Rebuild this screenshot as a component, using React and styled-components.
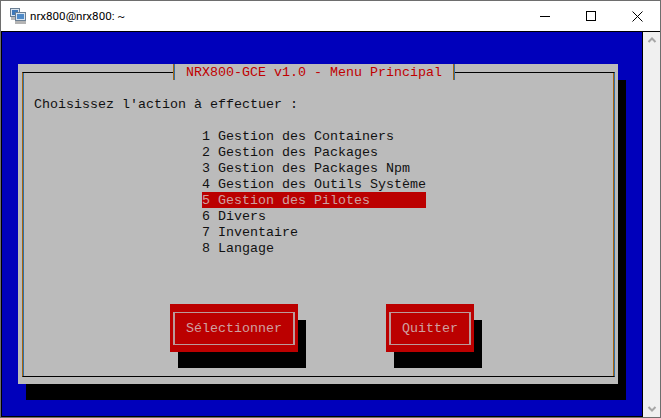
import React from "react";
import styled, { createGlobalStyle } from "styled-components";

const GlobalStyle = createGlobalStyle`
  html, body {
    margin: 0;
    padding: 0;
    background: #fff;
  }
`;

const items = [
  "Gestion des Containers",
  "Gestion des Packages",
  "Gestion des Packages Npm",
  "Gestion des Outils Système",
  "Gestion des Pilotes",
  "Divers",
  "Inventaire",
  "Langage",
];

function App() {
  return (
    <Window>
      <GlobalStyle />
      <TitleBar>
        <AppIcon />
        <WindowTitle>nrx800@nrx800: ~</WindowTitle>
        <Controls>
          <Control>
            <svg width="10" height="10" viewBox="0 0 10 10">
              <path d="M0 5.5H10" stroke="#000" />
            </svg>
          </Control>
          <Control>
            <svg width="10" height="10" viewBox="0 0 10 10">
              <rect x="0.5" y="0.5" width="9" height="9" fill="none" stroke="#000" />
            </svg>
          </Control>
          <Control>
            <svg width="11" height="11" viewBox="0 0 11 11">
              <path d="M0.5 0.5L10.5 10.5M10.5 0.5L0.5 10.5" stroke="#000" />
            </svg>
          </Control>
        </Controls>
      </TitleBar>
      <Body>
        <Terminal>
          <Dialog>
            <Frame>
              <Heading>NRX800-GCE v1.0 - Menu Principal</Heading>
              <Prompt>Choisissez l'action à effectuer :</Prompt>
              <Menu>
                {items.map((label, i) => (
                  <MenuItem key={label} $active={i === 4}>
                    <MenuNumber>{i + 1}</MenuNumber>
                    {label}
                  </MenuItem>
                ))}
              </Menu>
              <Buttons>
                <Button $width={128}>
                  <ButtonInner>Sélectionner</ButtonInner>
                </Button>
                <Button $width={88}>
                  <ButtonInner>Quitter</ButtonInner>
                </Button>
              </Buttons>
            </Frame>
          </Dialog>
        </Terminal>
        <Scrollbar>
          <svg width="10" height="8" viewBox="0 0 10 8">
            <path d="M1.5 6L5 2.5L8.5 6" fill="none" stroke="#a6a6a6" strokeWidth="2" />
          </svg>
          <svg width="10" height="8" viewBox="0 0 10 8">
            <path d="M1.5 2L5 5.5L8.5 2" fill="none" stroke="#a6a6a6" strokeWidth="2" />
          </svg>
        </Scrollbar>
      </Body>
    </Window>
  );
}

function AppIcon() {
  return (
    <Icon width="16" height="16" viewBox="0 0 16 16">
      <rect x="0.5" y="0.5" width="9" height="8" fill="#d8e4f0" stroke="#6b7f93" />
      <rect x="2" y="2" width="6" height="5" fill="#3f78b8" />
      <rect x="1" y="9" width="8" height="3" fill="#b8b8b8" />
      <rect x="5.5" y="4.5" width="10" height="8" fill="#d8e4f0" stroke="#6b7f93" />
      <rect x="7" y="6" width="7" height="5" fill="#4f8ac8" />
      <rect x="5" y="13" width="11" height="3" fill="#b4b4b4" />
    </Icon>
  );
}

export default App;

const Window = styled.div`
  width: 661px;
  height: 418px;
  box-sizing: border-box;
  border: 1px solid #6e6e6e;
  display: flex;
  flex-direction: column;
  overflow: hidden;
  background: #fff;
`;

const TitleBar = styled.div`
  height: 30px;
  flex: none;
  display: flex;
  align-items: center;
  padding-left: 9px;
  background: #fff;
  border-bottom: 1px solid #000;
`;

const Icon = styled.svg`
  flex: none;
  margin-right: 4px;
`;

const WindowTitle = styled.div`
  font-family: Roboto, "Liberation Sans", sans-serif;
  font-size: 11.6px;
  color: #000;
`;

const Controls = styled.div`
  margin-left: auto;
  display: flex;
`;

const Control = styled.div`
  width: 46px;
  height: 28px;
  display: flex;
  align-items: center;
  justify-content: center;
`;

const Body = styled.div`
  flex: 1;
  display: flex;
  min-height: 0;
`;

const Terminal = styled.div`
  width: 642px;
  flex: none;
  box-sizing: border-box;
  padding: 32px 0 0 16px;
  background: #0000bb;
  border-left: 1px solid #000;
  border-right: 1px solid #000;
  border-bottom: 1px solid #000;
`;

const Dialog = styled.div`
  width: 600px;
  height: 320px;
  box-sizing: border-box;
  padding: 8px 3px 7px 4px;
  background: #bbbbbb;
  box-shadow: 8px 16px 0 #000;
`;

const Frame = styled.div`
  position: relative;
  height: 305px;
  box-sizing: border-box;
  border-top: 1px solid #000;
  border-bottom: 1px solid #000;
  border-left: 1px solid #a8640c;
  border-right: 1px solid #2f6fa8;
  box-shadow: inset 1px 0 0 #2f6fa8, inset -1px 0 0 #a8640c;
  padding: 23px 0 0 11px;
  font-family: "Liberation Mono", monospace;
  font-size: 13.33px;
  line-height: 18px;
  color: #111;
  white-space: pre;
`;

const Heading = styled.div`
  position: absolute;
  top: -9px;
  left: 150px;
  width: 282px;
  height: 16px;
  box-sizing: border-box;
  padding-left: 12px;
  background: #bbbbbb;
  border-left: 1px solid #a8640c;
  border-right: 1px solid #2f6fa8;
  box-shadow: inset 1px 0 0 #2f6fa8, inset -1px 0 0 #a8640c;
  color: #c00000;
`;

const Prompt = styled.div`
  height: 16px;
`;

const Menu = styled.div`
  width: 224px;
  margin: 16px 0 0 168px;
`;

const MenuItem = styled.div`
  height: 16px;
  background: ${(props) => (props.$active ? "#bb0000" : "transparent")};
  color: ${(props) => (props.$active ? "#cfa0a0" : "#111")};
`;

const MenuNumber = styled.span`
  display: inline-block;
  width: 16px;
`;

const Buttons = styled.div`
  display: flex;
  gap: 88px;
  margin: 48px 0 0 136px;
`;

const Button = styled.div`
  width: ${(props) => props.$width}px;
  height: 48px;
  box-sizing: border-box;
  padding: 8px 3px;
  background: #bb0000;
  box-shadow: 8px 16px 0 #000;
`;

const ButtonInner = styled.div`
  height: 33px;
  box-sizing: border-box;
  border: 1px solid #bb9a9a;
  border-left-width: 2px;
  border-right-width: 2px;
  display: flex;
  align-items: center;
  justify-content: center;
  color: #cfa0a0;
`;

const Scrollbar = styled.div`
  flex: 1;
  background: #f0f0f0;
  display: flex;
  flex-direction: column;
  justify-content: space-between;
  align-items: center;
  padding: 4px 0;
`;
